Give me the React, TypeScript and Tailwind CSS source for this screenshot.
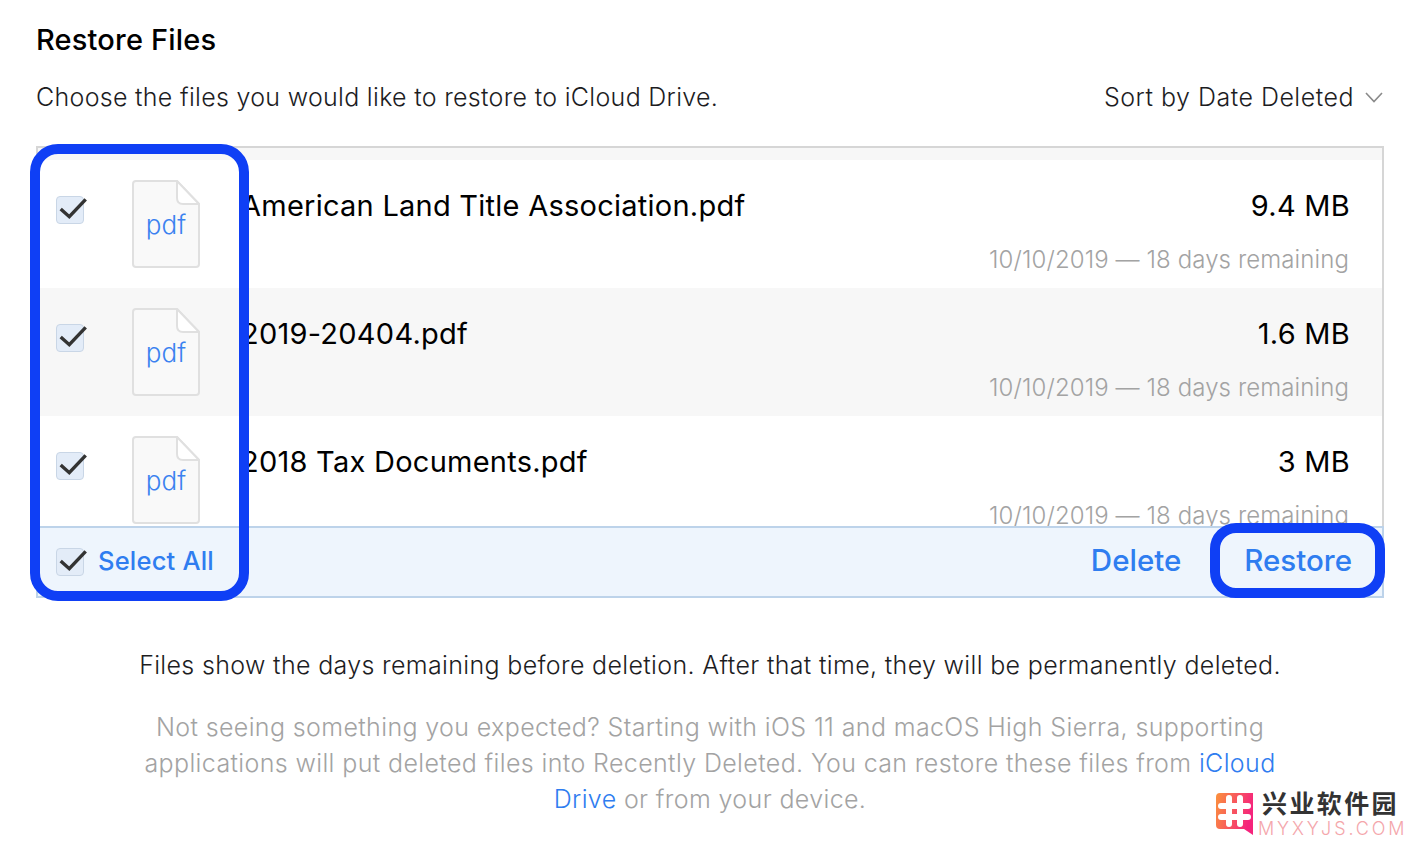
import React from 'react';

const font = { fontFamily: 'Inter, "Noto Sans CJK SC", sans-serif' };

interface FileRow {
  name: string;
  size: string;
  shaded?: boolean;
}

const files: FileRow[] = [
  { name: 'American Land Title Association.pdf', size: '9.4 MB' },
  { name: '2019-20404.pdf', size: '1.6 MB', shaded: true },
  { name: '2018 Tax Documents.pdf', size: '3 MB' },
];

const Check = () => (
  <div className="relative w-[28px] h-[28px] rounded-[4px] border border-[#c9d6e6] bg-[#e3ecf8]">
    <svg className="absolute left-[-1px] top-[-1px] overflow-visible" width="32" height="26" viewBox="0 0 32 26" fill="none">
      <path d="M4.7 13 L13.3 20.7 L29.7 3.3" stroke="#333" strokeWidth="3.4" />
    </svg>
  </div>
);

const PdfIcon = () => (
  <div className="relative w-[68px] h-[88px]">
    <svg className="absolute inset-0" width="68" height="88" viewBox="0 0 68 88" fill="none">
      <path
        d="M4 1 H45 L67 24 V84 Q67 87 64 87 H4 Q1 87 1 84 V4 Q1 1 4 1 Z"
        fill="#f9f9f9"
        stroke="#e0e0e0"
        strokeWidth="2"
      />
      <path d="M45 1 V18 Q45 24 51 24 H67 Z" fill="#ffffff" stroke="#e0e0e0" strokeWidth="2" strokeLinejoin="round" />
    </svg>
    <span className="absolute left-0 right-0 top-[29px] text-center text-[26px] leading-[32px] font-light text-[#3b82f0]">pdf</span>
  </div>
);

const Row = ({ file }: { file: FileRow }) => (
  <div className={`h-[128px] shrink-0 flex pl-[18px] pr-[32px] ${file.shaded ? 'bg-[#f7f7f7]' : 'bg-white'}`}>
    <div className="pt-[36px]">
      <Check />
    </div>
    <div className="pt-[20px] ml-[48px]">
      <PdfIcon />
    </div>
    <div className="flex-1 ml-[41px] pt-[27px]">
      <div className="flex justify-between text-[29px] leading-[38px] tracking-[0.25px] text-black">
        <span>{file.name}</span>
        <span>{file.size}</span>
      </div>
      <div className="mt-[17px] mr-[1px] text-right text-[24px] leading-[36px] font-light tracking-[0.1px] text-[#a3a3a3]">10/10/2019 — 18 days remaining</div>
    </div>
  </div>
);

const Watermark = () => (
  <div className="absolute left-[1216px] top-[791px] flex items-start">
    <svg className="mt-[2px]" width="37" height="42" viewBox="0 0 37 42">
      <defs>
        <linearGradient id="wm" x1="0" y1="0" x2="1" y2="0.3">
          <stop offset="0" stopColor="#fb923c" />
          <stop offset="1" stopColor="#f5247c" />
        </linearGradient>
      </defs>
      <path d="M4 0 H37 V42 L28 36 H4 Q0 36 0 32 V4 Q0 0 4 0 Z" fill="url(#wm)" />
      <path d="M13 5 V31 M24 5 V31 M5 13 H32 M5 24 H32" stroke="#fff" strokeWidth="6" strokeLinecap="round" />
    </svg>
    <div className="flex flex-col ml-[5px]">
      <span className="ml-[4px] text-[25px] leading-[26px] font-bold tracking-[2.4px] text-[#333]">兴业软件园</span>
      <span className="mt-[2px] text-[18px] leading-[20px] font-light tracking-[2.9px] text-[#f4a6ab]">MYXYJS.COM</span>
    </div>
  </div>
);

export default function App() {
  return (
    <div className="relative w-[1418px] h-[850px] overflow-hidden bg-white" style={font}>
      <div className="pt-[22px] pl-[36px] pr-[34px]">
        <h1 className="text-[29px] leading-[36px] font-medium tracking-[0.18px] text-black">Restore Files</h1>
        <div className="mt-[21px] flex items-center justify-between text-[25px] leading-[36px] font-light tracking-[0.3px] text-[#1d1d1f]">
          <span>Choose the files you would like to restore to iCloud Drive.</span>
          <span className="flex items-center gap-[11px] mr-[1px] tracking-[0.5px]">
            Sort by Date Deleted
            <svg width="18" height="11" viewBox="0 0 18 11" fill="none">
              <path d="M1 1 L9 9.5 L17 1" stroke="#8a8a8a" strokeWidth="1.6" />
            </svg>
          </span>
        </div>

        <div className="mt-[31px] h-[452px] border-x-2 border-t-2 border-[#d6d6d6] flex flex-col">
          <div className="flex-1 min-h-0 pt-[12px] bg-[#f7f7f7] flex flex-col overflow-hidden">
            {files.map(file => (
              <Row key={file.name} file={file} />
            ))}
          </div>
          <div className="h-[72px] -mx-[2px] shrink-0 flex items-center pl-[18px] pr-[30px] bg-[#eef5fd] border-2 border-[#bdd3ea] text-[29.5px] font-medium text-[#2f7df0]">
            <Check />
            <span className="ml-[14px] -mt-[2px] text-[25.5px] tracking-[0.2px]">Select All</span>
            <span className="ml-auto -mt-[3px]">Delete</span>
            <span className="ml-[63px] -mt-[3px]">Restore</span>
          </div>
        </div>

        <p className="mt-[49px] text-center text-[25px] leading-[36px] font-light tracking-[0.34px] text-[#1d1d1f]">
          Files show the days remaining before deletion. After that time, they will be permanently deleted.
        </p>
        <p className="mt-[26px] mx-auto w-[1150px] text-center text-[25px] leading-[36px] font-light tracking-[0.37px] text-[#a3a3a3]">
          Not seeing something you expected? Starting with iOS 11 and macOS High Sierra, supporting applications will put deleted files into Recently Deleted. You can restore these files from <span className="text-[#2f7df0]">iCloud Drive</span> or from your device.
        </p>
      </div>

      {/* annotation boxes */}
      <div className="absolute left-[30px] top-[144px] w-[219px] h-[457px] rounded-[28px] border-[10px] border-[#0f3ff5]" />
      <div className="absolute left-[1210px] top-[523px] w-[175px] h-[75px] rounded-[26px] border-[10px] border-[#0f3ff5]" />

      <Watermark />
    </div>
  );
}
